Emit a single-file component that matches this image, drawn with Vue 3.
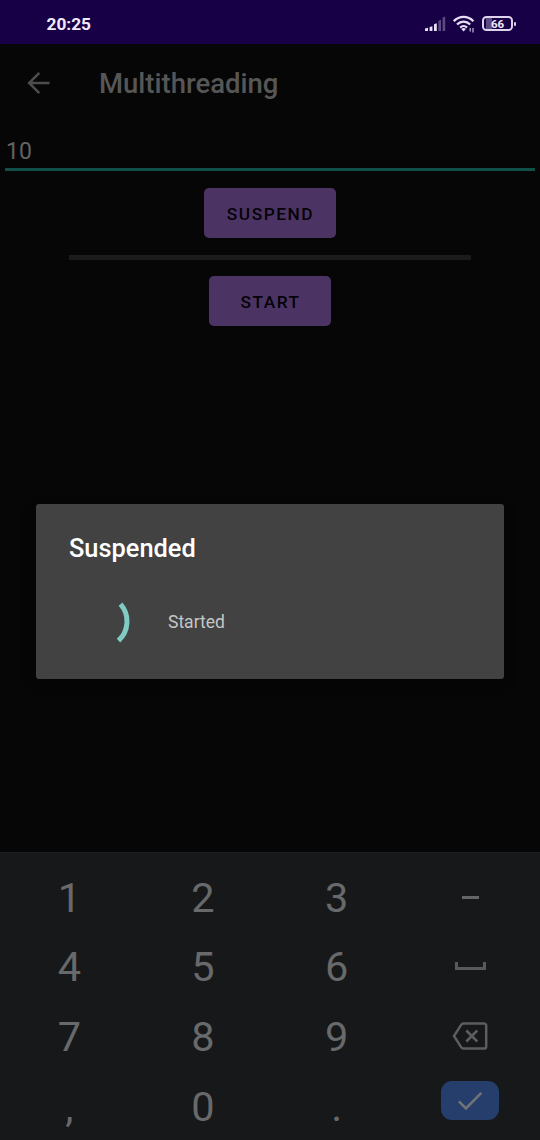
<script setup>
const keys = ['1', '2', '3', 'minus', '4', '5', '6', 'space', '7', '8', '9', 'delete', ',', '0', '.', 'done']
const icons = ['minus', 'space', 'delete', 'done']
</script>

<template>
  <div class="screen">
    <header class="status">
      <span class="clock">20:25</span>
      <div class="indicators">
        <svg class="signal" width="21" height="16" viewBox="0 0 21 16">
          <path d="M0 15v-2.4l3-.8V15zM4.6 15v-4l2.8-.8V15zM9 15V8.2l2.8-1V15z" fill="#e6def2" />
          <path d="M13.4 15V4.8l2.6-1V15zM17.6 15V1.5l2.6-1V15z" fill="#5d4a83" />
        </svg>
        <svg class="wifi" width="22" height="18" viewBox="0 0 22 18">
          <g fill="none" stroke="#e6def2" stroke-width="2.3">
            <path d="M.8 6.2C6.4.5 14.8.5 20.4 6.2" />
            <path d="M4 9.5c3.8-3.8 9.4-3.8 13.2 0" />
            <path d="M7.2 12.6c2-2 4.8-2 6.8 0" />
          </g>
          <path d="M8.3 14c1.4-1.3 3.2-1.3 4.6 0l-2.3 2.5z" fill="#e6def2" />
          <path d="M17.2 13v3.5M20 13v4.5" stroke="#c8bada" stroke-width="1.2" />
        </svg>
        <div class="battery"><span>66</span></div>
      </div>
    </header>

    <nav class="toolbar">
      <svg width="24" height="24" viewBox="0 0 24 24" fill="none" stroke="#4d4d4d" stroke-width="2.5">
        <path d="M22.5 12H3M12.3 1.8L2.1 12l10.2 10.2" />
      </svg>
      <h1>Multithreading</h1>
    </nav>

    <main class="content">
      <div class="field">10</div>
      <button class="action suspend">SUSPEND</button>
      <div class="progress"></div>
      <button class="action start">START</button>
    </main>

    <section class="keyboard">
      <div v-for="key in keys" :key="key" class="key" :class="{ 'done-cell': key === 'done' }">
        <span v-if="!icons.includes(key)">{{ key }}</span>
        <i v-else-if="key === 'minus'" class="minus"></i>
        <i v-else-if="key === 'space'" class="space"></i>
        <svg v-else-if="key === 'delete'" class="delete" width="36" height="28" viewBox="0 0 36 28" fill="none" stroke="#5c5d5e" stroke-width="2.5">
          <path d="M11.5 1.4H32a2.2 2.2 0 0 1 2.2 2.2v20.8a2.2 2.2 0 0 1-2.2 2.2H11.5q-1.4 0-2.2-1.2L2 14l7.3-11.4q.8-1.2 2.2-1.2z" />
          <path d="M14.3 8.5l11 11M25.3 8.5l-11 11" />
        </svg>
        <div v-else class="done">
          <svg width="26" height="20" viewBox="0 0 26 20" fill="none" stroke="#707479" stroke-width="2.6">
            <path d="M1.9 10.3l7 7L24.3 1.8" />
          </svg>
        </div>
      </div>
    </section>

    <section class="dialog">
      <h2>Suspended</h2>
      <div class="message">
        <svg width="56" height="56" viewBox="0 0 56 56" fill="none" stroke="#80cbc4" stroke-width="5">
          <path d="M33.5 10.2A26 26 0 0 1 31.5 46.6" />
        </svg>
        <span>Started</span>
      </div>
    </section>
  </div>
</template>

<style>
body { background: #060606; }
</style>

<style scoped>
* { box-sizing: border-box; }
.screen {
  position: relative;
  display: flex;
  flex-direction: column;
  width: 540px;
  height: 1140px;
  overflow: hidden;
  background: #060606;
  font-family: Roboto, "Noto Sans", sans-serif;
}
.status {
  display: flex;
  align-items: center;
  justify-content: space-between;
  height: 44px;
  padding: 3px 27px 0 46.5px;
  background: #180047;
  color: #f0eafa;
}
.clock { font-size: 17.3px; font-weight: 700; line-height: 20px; }
.indicators { display: flex; align-items: center; }
.signal { margin-right: 7px; }
.wifi { margin-right: 7px; margin-top: 1px; }
.battery {
  position: relative;
  display: flex;
  align-items: center;
  justify-content: center;
  width: 31px;
  height: 15px;
  border: 2px solid #ddd3ec;
  border-radius: 4.5px;
  background: linear-gradient(90deg, transparent 2px, #5d4a83 2px, #5d4a83 8px, transparent 8px);
  font-size: 11.5px;
  font-weight: 700;
  line-height: 11px;
}
.battery span { padding-top: 1px; }
.battery::after {
  position: absolute;
  right: -5px;
  top: 4px;
  width: 2px;
  height: 4px;
  border-radius: 1px;
  background: #ddd3ec;
  content: "";
}
.toolbar {
  display: flex;
  align-items: center;
  height: 77px;
  padding-left: 27px;
}
h1 {
  margin: 3px 0 0 48px;
  color: #565656;
  font-size: 27.5px;
  font-weight: 500;
  line-height: 32px;
}
.content {
  display: flex;
  flex: 1;
  flex-direction: column;
  align-items: center;
}
.field {
  width: 530px;
  height: 50px;
  padding: 16px 0 0 1px;
  border-bottom: 3px solid #105049;
  color: #626262;
  font-size: 23px;
  line-height: 30px;
}
.action {
  height: 50px;
  padding: 2px 0 0 1px;
  border: 0;
  border-radius: 5px;
  background: #4b3463;
  color: #050208;
  font: 500 17.3px/20px Roboto, sans-serif;
  letter-spacing: 1.55px;
}
.suspend { width: 132px; margin-top: 17.4px; }
.start { width: 122px; margin-top: 16.4px; }
.progress { width: 402px; height: 5px; margin-top: 16.6px; background: #1b1b1b; }
.keyboard {
  display: grid;
  grid-template-columns: repeat(4, 133.7px);
  grid-template-rows: repeat(4, 69.6px);
  height: 288px;
  padding: 10px 0 0 2.5px;
  border-top: 1px solid #1d1e1f;
  background: #17181a;
  color: #68696a;
}
.key {
  display: flex;
  align-items: center;
  justify-content: center;
  font-size: 41.5px;
  line-height: 48px;
}
.minus { width: 17px; height: 3px; margin-top: -1px; background: #646567; }
.space { width: 31px; height: 8px; margin-top: -2px; border: solid #58595a; border-width: 0 3px 3px; }
.delete { margin-top: -1px; }
.done-cell { align-items: flex-start; padding-top: 9.5px; }
.done {
  display: flex;
  align-items: center;
  justify-content: center;
  width: 58px;
  height: 39px;
  border-radius: 11px;
  background: #263e6b;
}
.dialog {
  position: absolute;
  left: 36px;
  top: 504px;
  width: 468px;
  height: 175.4px;
  padding: 28px 33px;
  border-radius: 3px;
  background: #424242;
  box-shadow: 0 4px 14px rgba(0, 0, 0, 0.3);
}
h2 { margin: 0; color: #fff; font-size: 25.4px; font-weight: 500; line-height: 32px; }
.message { display: flex; align-items: center; margin-top: 30px; padding-left: 18px; color: #c6c6c6; font-size: 17.5px; }
.message span { margin: -1px 0 0 25px; }
</style>
